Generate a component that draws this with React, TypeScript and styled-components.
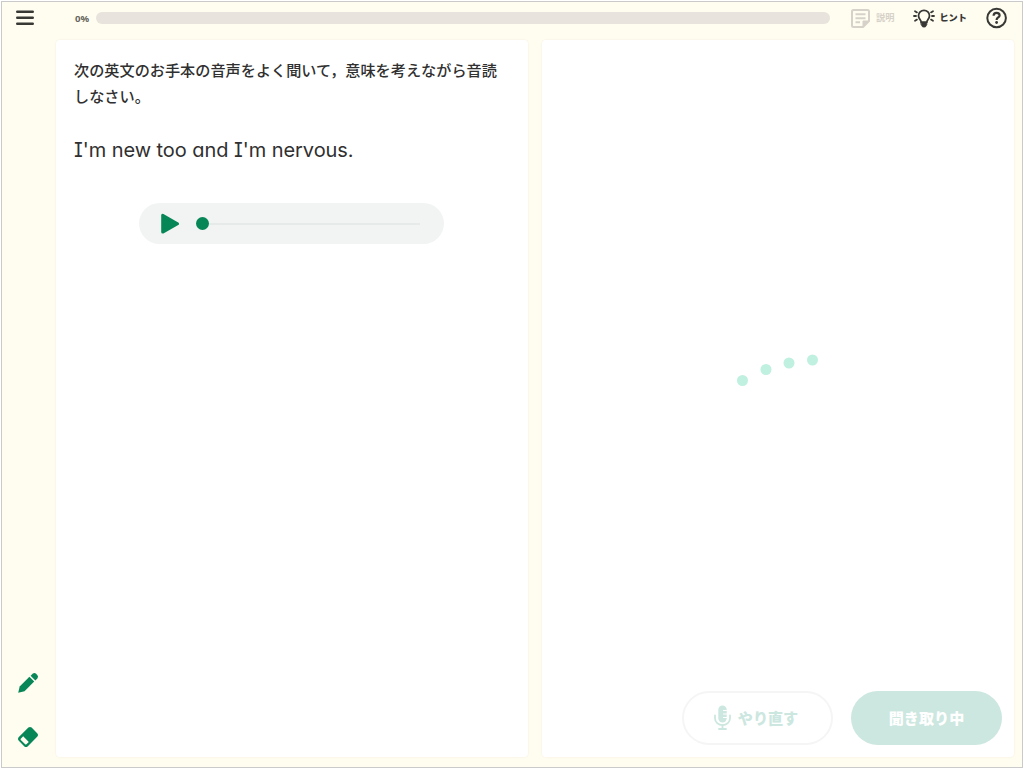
import React from "react";
import styled, { createGlobalStyle } from "styled-components";

const GlobalStyle = createGlobalStyle`
  *, *::before, *::after { box-sizing: border-box; }
  body { margin: 0; background: #fff; color: #303030; font-family: "Noto Sans CJK JP", sans-serif; }
  button { font-family: inherit; padding: 0; margin: 0; background: none; border: 0; color: inherit; }
  svg { display: block; flex: none; }
`;

const Page = styled.div`
  height: 769px;
  padding: 1px;
  overflow: hidden;
`;

const Frame = styled.div`
  height: 767px;
  border: 1px solid #cacaca;
  background: #fffcf0;
  display: grid;
  grid-template: 38px 717px / 54px 1fr;
`;

const Header = styled.header`
  grid-column: 1 / -1;
  display: flex;
  align-items: center;
  padding: 0 14px 6px 14px;
`;

const Progress = styled.div`
  display: flex;
  align-items: center;
  margin-left: 41px;
`;

const Percent = styled.span`
  width: 21px;
  padding-top: 2px;
  font: 700 9.6px/12px "Open Sans", sans-serif;
  color: #66665f;
`;

const Bar = styled.div`
  width: 734px;
  height: 12px;
  border-radius: 6px;
  background: #e8e4dd;
`;

const Tool = styled.button<{ $gap: number; $left: number; $muted?: boolean }>`
  display: flex;
  align-items: center;
  gap: ${(p) => p.$gap}px;
  margin-left: ${(p) => p.$left}px;
  font-size: 9.2px;
  line-height: 12px;
  font-weight: ${(p) => (p.$muted ? 700 : 900)};
  white-space: nowrap;
  color: ${(p) => (p.$muted ? "#d6d2c9" : "#383835")};
`;

const ToolLabel = styled.span`
  padding-bottom: 2px;
`;

const HelpButton = styled.button`
  margin-left: auto;
`;

const Rail = styled.nav`
  display: flex;
  flex-direction: column;
  justify-content: flex-end;
  align-items: center;
  gap: 32px;
  padding: 0 2px 9px 0;
`;

const Panels = styled.main`
  display: grid;
  grid-template-columns: 472px 472px;
  gap: 14px;
`;

const Panel = styled.section`
  display: flex;
  flex-direction: column;
  background: #fff;
  border-radius: 4px;
  box-shadow: 0 0 2px rgba(90, 80, 40, 0.08);
`;

const Instruction = styled.p`
  margin: 17px 0 0 18px;
  font-size: 15.17px;
  font-weight: 500;
  line-height: 25.5px;
  white-space: nowrap;
`;

const Sentence = styled.p`
  margin: 27px 0 0 18px;
  font: 400 20px/30px Inter, sans-serif;
  font-feature-settings: "cv08" 1, "cv11" 1;
  letter-spacing: -0.06px;
  white-space: nowrap;
`;

const Player = styled.div`
  width: 305px;
  height: 41px;
  margin: 38px 0 0 83px;
  padding: 0 24px 0 22px;
  border-radius: 21px;
  background: #f2f4f3;
  display: flex;
  align-items: center;
`;

const Knob = styled.span`
  width: 13px;
  height: 13px;
  margin-left: 17px;
  border-radius: 50%;
  background: #078758;
`;

const Track = styled.span`
  flex: 1;
  height: 2px;
  background: #e6eae8;
`;

const Listening = styled.div`
  flex: 1;
  display: flex;
  justify-content: center;
  padding: 314px 2px 0 0;
`;

const Actions = styled.footer`
  display: flex;
  gap: 18px;
  justify-content: flex-end;
  padding: 0 12px 12px 0;
`;

const ActionButton = styled.button<{ $filled?: boolean }>`
  width: 151px;
  height: 54px;
  display: flex;
  align-items: center;
  justify-content: center;
  gap: 7px;
  padding: ${(p) => (p.$filled ? "0 0 2px" : "0 3px 2px 0")};
  border-radius: 27px;
  border: ${(p) => (p.$filled ? "0" : "2px solid #f5f5f5")};
  background: ${(p) => (p.$filled ? "#cce7df" : "#fff")};
  color: ${(p) => (p.$filled ? "#fff" : "#cce7df")};
  font-size: 15.1px;
  line-height: 24px;
  font-weight: 900;
`;

const dots = [
  [5.5, 26.5],
  [29, 15.5],
  [52, 9],
  [75.5, 6],
];

export default function App() {
  return (
    <Page>
      <GlobalStyle />
      <Frame>
        <Header>
          <button aria-label="メニュー">
            <svg width="18" height="16" viewBox="0 0 18 16" stroke="#383835" strokeWidth="2.6" strokeLinecap="round">
              <path d="M1.3 1.7h15.4M1.3 7.7h15.4M1.3 13.7h15.4" />
            </svg>
          </button>
          <Progress>
            <Percent>0%</Percent>
            <Bar />
          </Progress>
          <Tool $gap={6} $left={21} $muted>
            <svg width="19" height="19" viewBox="0 0 19 19" fill="none" stroke="currentColor" strokeWidth="2" strokeLinejoin="round">
              <path d="M12 18H2.5Q1 18 1 16.5v-14Q1 1 2.5 1h14Q18 1 18 2.5V12zM4.5 5.2h10M4.5 9.2h10M4.5 13.2H9" />
              <path d="M12 18v-6h6z" fill="currentColor" strokeWidth="1" />
            </svg>
            <ToolLabel>説明</ToolLabel>
          </Tool>
          <Tool $gap={4} $left={19}>
            <svg width="22" height="19" viewBox="0 0 22 19" fill="none" stroke="currentColor" strokeWidth="1.8" strokeLinecap="round">
              <path d="M8.2 13.2c0-2.4-2.7-3.3-2.7-6.4a5.5 5.5 0 0 1 11 0c0 3.1-2.7 4-2.7 6.4z" />
              <path d="M8.2 13.6h5.6v2.1L12.3 18H9.7l-1.5-2.3z" fill="currentColor" strokeWidth="0.8" />
              <path d="M1 7h2M19 7h2M2 2.2l2 1.2M20 2.2l-2 1.2M2 11.8l2-1.2M20 11.8l-2-1.2" />
            </svg>
            <ToolLabel>ヒント</ToolLabel>
          </Tool>
          <HelpButton aria-label="ヘルプ">
            <svg width="22" height="22" viewBox="0 0 22 22" fill="none" stroke="#383835" strokeWidth="2">
              <circle cx="10.6" cy="11" r="9.3" />
              <path d="M7.6 8.8c0-2 1.2-3 3-3s3 1 3 2.6c0 2-3 2.1-3 4.5" strokeWidth="2.2" />
              <circle cx="10.6" cy="15.5" r="1.4" fill="#383835" stroke="none" />
            </svg>
          </HelpButton>
        </Header>
        <Rail>
          <button aria-label="ペン">
            <svg width="22" height="22" viewBox="0 0 22 22" fill="#078758">
              <path d="M1.2 20.8 2.7 14.5 12.4 4.8l4.8 4.8L7.5 19.3z" />
              <path d="m13.6 3.7 2-2q1.8-1.5 3.5 0l1.2 1.2q1.5 1.7 0 3.5l-2 2z" />
            </svg>
          </button>
          <button aria-label="消しゴム">
            <svg width="22" height="22" viewBox="0 0 22 22">
              <path d="M1.6 11.3 11.4 1.6q1.6-1.4 3.2 0l5.8 5.8q1.4 1.6 0 3.2l-9.8 9.8q-1.6 1.4-3.2 0l-5.8-5.8q-1.4-1.6 0-3.3z" fill="#078758" />
              <path d="m6.2 10.3 5.6 5.6-2.4 2.4q-.6.6-1.2 0L3.8 13.9q-.6-.6 0-1.2z" fill="#fffcf0" />
            </svg>
          </button>
        </Rail>
        <Panels>
          <Panel>
            <Instruction lang="ja">
              次の英文のお手本の音声をよく聞いて，意味を考えながら音読
              <br />
              しなさい。
            </Instruction>
            <Sentence>I'm new too and I'm nervous.</Sentence>
            <Player>
              <svg width="18" height="21" viewBox="0 0 18 21" fill="#078758" stroke="#078758" strokeWidth="3" strokeLinejoin="round">
                <path d="M1.7 2.3v16.8l14.8-8.4z" />
              </svg>
              <Knob />
              <Track />
            </Player>
          </Panel>
          <Panel>
            <Listening>
              <svg width="81" height="33" viewBox="0 0 81 33" fill="#c0f0df">
                {dots.map(([x, y]) => (
                  <circle key={x} cx={x} cy={y} r="5.5" />
                ))}
              </svg>
            </Listening>
            <Actions>
              <ActionButton>
                <svg width="17" height="25" viewBox="0 0 17 25" fill="none" stroke="currentColor" strokeWidth="1.8" strokeLinecap="round">
                  <rect x="4.3" y="0.5" width="8.4" height="17" rx="4.2" fill="currentColor" stroke="none" />
                  <path d="M1 10.5v2.7a7.5 7 0 0 0 15 0v-2.7M8.5 20v4M5 24h7" />
                  <path d="M9.5 5.5h3M9.5 9h3M9.5 12.5h3" stroke="#fff" strokeWidth="1" />
                </svg>
                やり直す
              </ActionButton>
              <ActionButton $filled>聞き取り中</ActionButton>
            </Actions>
          </Panel>
        </Panels>
      </Frame>
    </Page>
  );
}
